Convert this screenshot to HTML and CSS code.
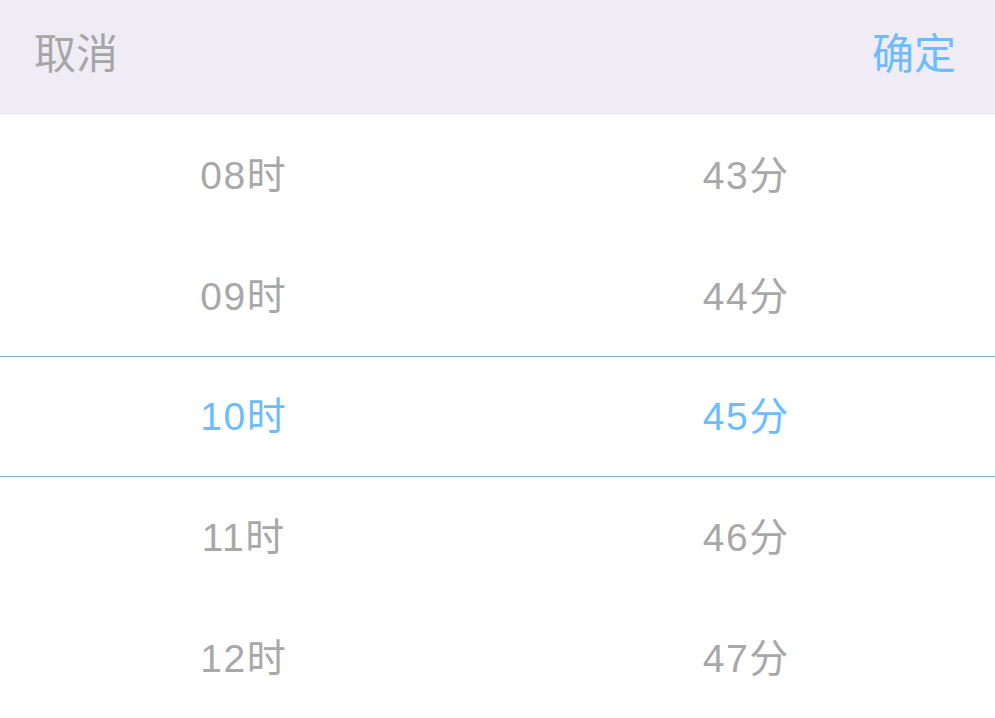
FILE: index.html
```html
<!DOCTYPE html>
<html lang="zh">
<head>
<meta charset="utf-8">
<link rel="stylesheet" href="styles.css">
</head>
<body>
<div class="sheet">
  <header class="toolbar">
    <span class="btn cancel">取消</span>
    <span class="btn confirm">确定</span>
  </header>
  <div class="picker">
    <div class="row"><span class="cell">08时</span><span class="cell">43分</span></div>
    <div class="row"><span class="cell">09时</span><span class="cell">44分</span></div>
    <div class="row selected"><span class="cell">10时</span><span class="cell">45分</span></div>
    <div class="row"><span class="cell">11时</span><span class="cell">46分</span></div>
    <div class="row"><span class="cell">12时</span><span class="cell">47分</span></div>
  </div>
</div>
</body>
</html>
```

FILE: styles.css
```css
html, body {
  margin: 0;
  padding: 0;
  height: 100%;
  background: #ffffff;
}
body {
  font-family: "Liberation Sans", "Noto Sans CJK SC", sans-serif;
}
.sheet {
  display: flex;
  flex-direction: column;
  height: 718px;
}
.toolbar {
  height: 115px;
  flex: none;
  background: #efecf6;
  display: flex;
  align-items: center;
  justify-content: space-between;
  padding: 0 39px 0 34px;
  box-sizing: border-box;
}
.btn {
  font-family: "Noto Sans CJK SC", sans-serif;
  font-size: 42px;
  line-height: 1;
  padding-bottom: 14px;
}
.cancel { color: #a6a6a6; }
.confirm { color: #6bbdff; }
.picker {
  flex: 1;
  display: grid;
  grid-template-rows: repeat(5, 1fr);
}
.row {
  display: grid;
  grid-template-columns: 1fr 1fr;
  align-items: center;
  box-sizing: border-box;
}
.row.selected {
  border-top: 1px solid #7fb5e6;
  border-bottom: 1px solid #7fb5e6;
}
.cell {
  text-align: center;
  font-size: 39px;
  letter-spacing: 1.5px;
  color: #a8a8a8;
  line-height: 1;
  padding-top: 1px;
}
.row .cell:first-child { padding-right: 10px; }
.selected .cell { color: #6bbdff; }
```
